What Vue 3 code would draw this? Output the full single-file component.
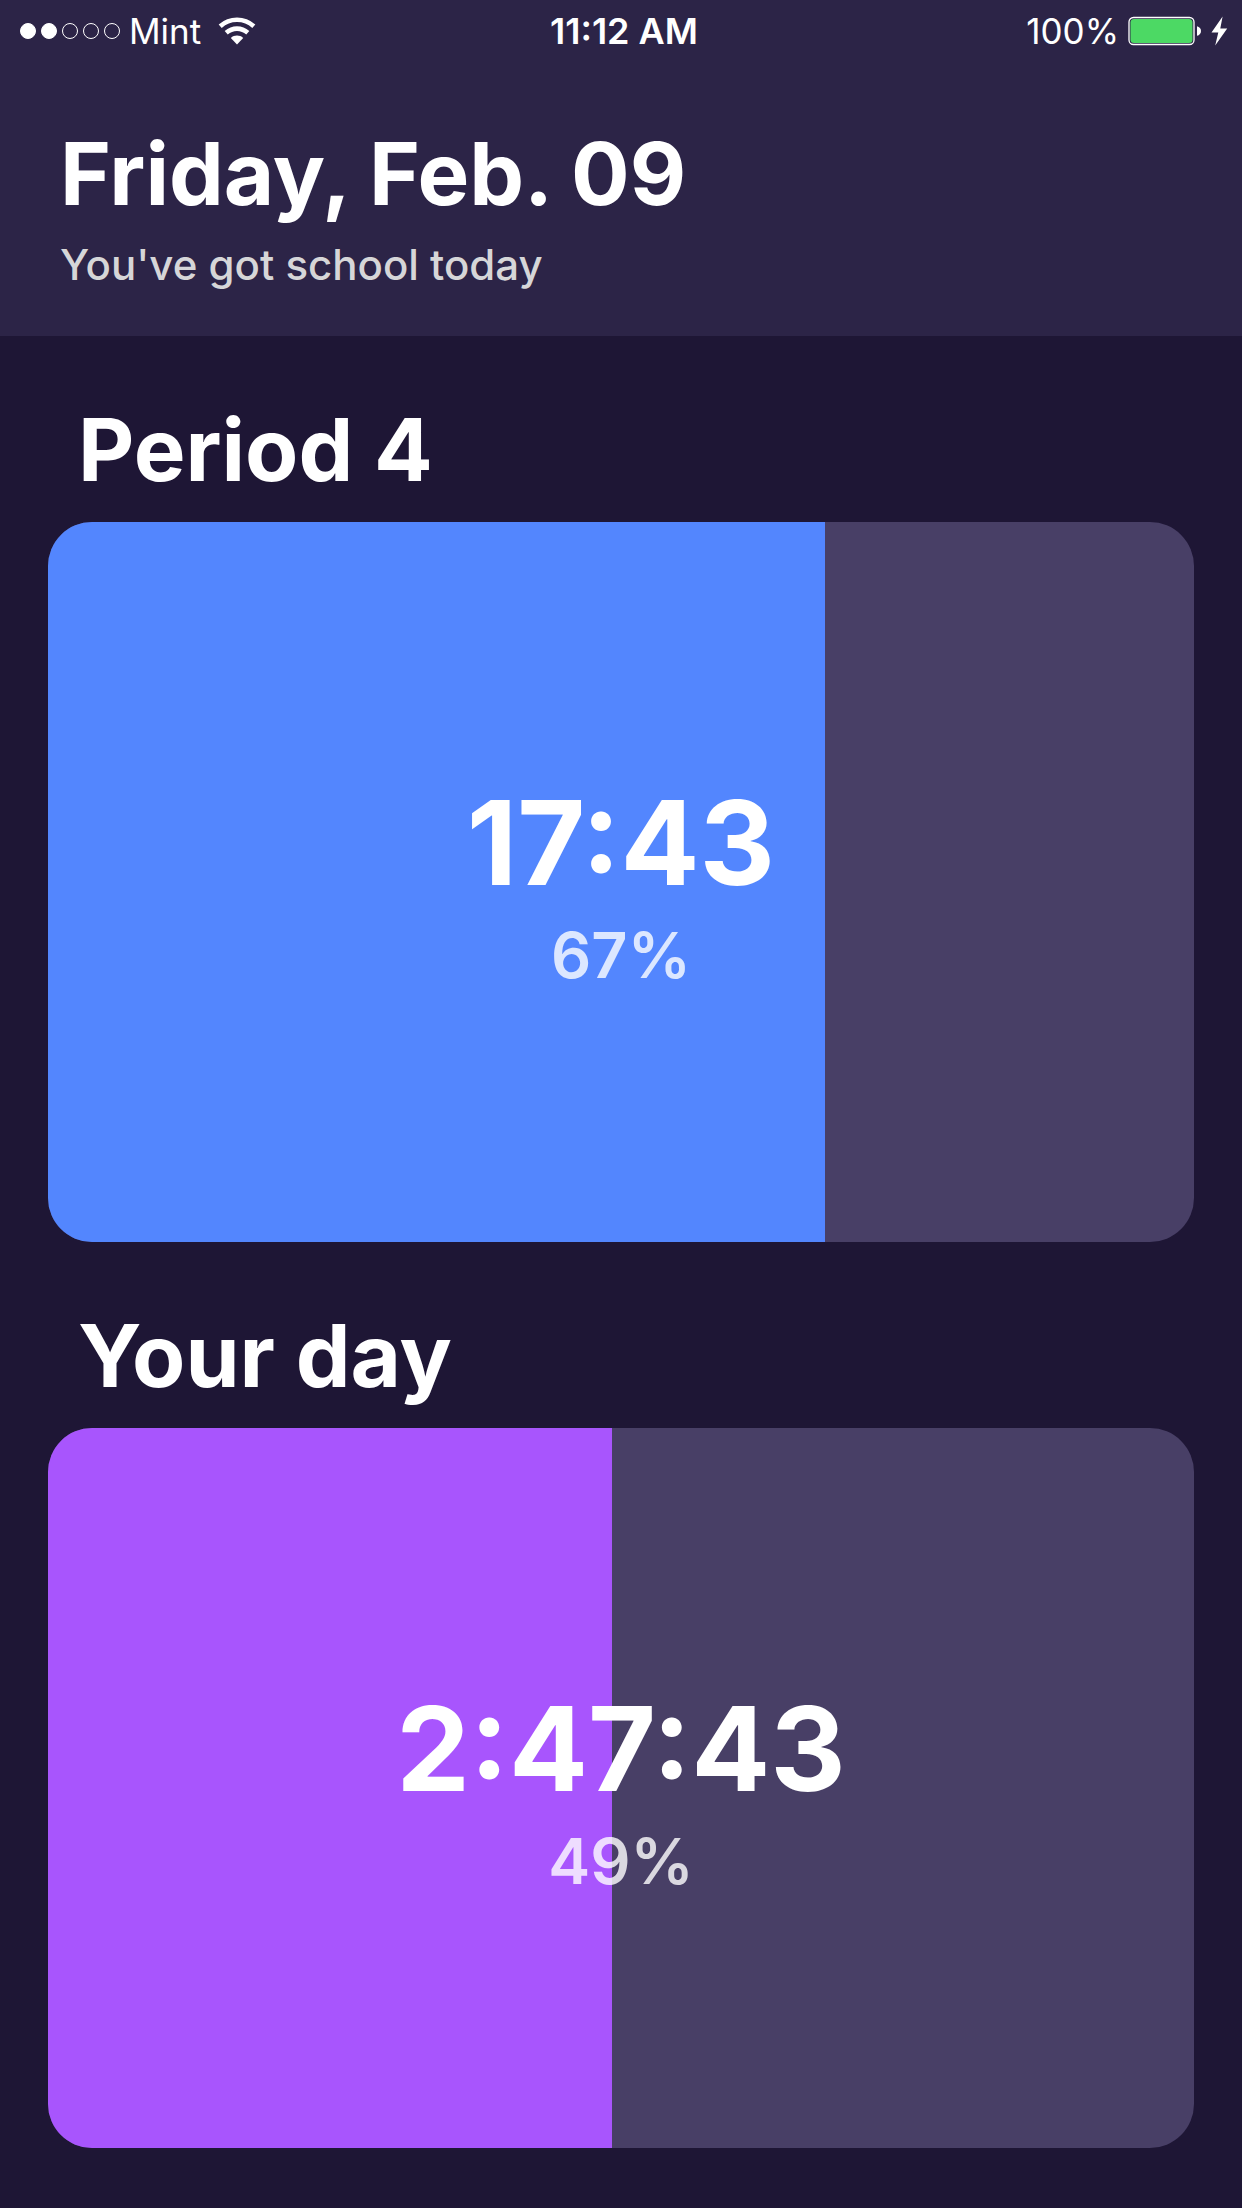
<script setup>
const signal = [true, true, false, false, false]

const timers = [
  { id: 'period', title: 'Period 4', remaining: '17:43', percent: 67, fill: 67.8, tone: 'blue' },
  { id: 'day', title: 'Your day', remaining: '2:47:43', percent: 49, fill: 49.2, tone: 'purple' },
]
</script>

<template>
  <div class="app">
    <header class="header">
      <div class="status">
        <div class="status-side">
          <div class="signal">
            <span v-for="(on, i) in signal" :key="i" class="dot" :class="{ on }"></span>
          </div>
          <span class="carrier">Mint</span>
          <svg class="wifi" width="38" height="28" viewBox="0 0 38 28" aria-label="Wi-Fi">
            <g fill="none" stroke="#fff" stroke-width="4.600">
              <path d="M2.200 9.200C11.800 .6 26.200 .6 35.800 9.200" />
              <path d="M8.200 15.800C14.500 10.200 23.500 10.200 29.800 15.800" />
            </g>
            <path d="M12.800 21C16.300 17.800 21.700 17.800 25.200 21L19 27.400Z" fill="#fff" />
          </svg>
        </div>
        <span class="clock">11:12 AM</span>
        <div class="status-side end">
          <span class="charge">100%</span>
          <svg class="battery" width="74" height="30" viewBox="0 0 74 30" aria-label="Battery full">
            <rect x="1" y="1.500" width="65" height="27" rx="4.500" fill="none" stroke="#fff" stroke-width="1.300" />
            <rect x="2.500" y="3" width="62" height="24" rx="3.500" fill="#4cd964" />
            <path d="M69 10.200C71.500 10.800 73 12.500 73 15S71.500 19.200 69 19.800Z" fill="#fff" />
          </svg>
          <svg class="bolt" width="17" height="30" viewBox="0 0 17 30" aria-label="Charging">
            <path d="M11.600 .5L.5 16.500H7.300L4.200 29.500L16.200 12.500H9.300Z" fill="#fff" />
          </svg>
        </div>
      </div>
      <div class="heading">
        <h1 class="title">Friday, Feb. 09</h1>
        <p class="subtitle">You've got school today</p>
      </div>
    </header>

    <main class="timers">
      <section v-for="t in timers" :key="t.id" class="timer">
        <h2 :id="t.id" class="title timer-title">{{ t.title }}</h2>
        <div
          class="card"
          role="progressbar"
          :aria-labelledby="t.id"
          :aria-valuenow="t.percent"
          aria-valuemin="0"
          aria-valuemax="100"
        >
          <div class="fill" :class="t.tone" :style="{ width: t.fill + '%' }"></div>
          <div class="readout">
            <span class="remaining">{{ t.remaining }}</span>
            <span class="percent">{{ t.percent }}%</span>
          </div>
        </div>
      </section>
    </main>
  </div>
</template>

<style>
body {
  margin: 0;
  background: #1e1635;
}
</style>

<style scoped>
.app {
  display: flex;
  flex-direction: column;
  min-height: 100vh;
  background: #1e1635;
  color: #fff;
  font-family: Inter, "Liberation Sans", sans-serif;
}

.header {
  background: #2c2447;
}

.status {
  display: grid;
  grid-template-columns: 1fr auto 1fr;
  align-items: center;
  height: 60px;
  padding: 0 14px 0 20px;
  font-size: 35px;
  line-height: 62px;
}

.status-side {
  display: flex;
  align-items: center;
  height: 60px;
}

.status-side.end {
  justify-content: flex-end;
}

.signal {
  display: flex;
  gap: 5px;
}

.dot {
  box-sizing: border-box;
  width: 16px;
  height: 16px;
  border: 1px solid #fff;
  border-radius: 50%;
}

.dot.on {
  background: #fff;
}

.carrier {
  margin: 0 17px 0 9px;
}

.clock {
  font-size: 36px;
  font-weight: 600;
}

.battery {
  margin: 0 9px 0 9px;
}

.heading {
  padding: 60px 60px 46px;
}

.title {
  margin: 0;
  font-size: 87px;
  font-weight: 700;
  line-height: 108px;
}

.subtitle {
  margin: 12px 0 0;
  color: #d6d6d8;
  font-size: 42px;
  font-weight: 500;
  line-height: 50px;
}

.timers {
  display: flex;
  flex: 1;
  flex-direction: column;
  gap: 60px;
  padding: 60px 48px;
}

.timer {
  display: flex;
  flex: 1;
  flex-direction: column;
}

.timer-title {
  padding: 0 30px 18px;
}

.card {
  position: relative;
  display: flex;
  flex: 1;
  align-items: center;
  justify-content: center;
  min-height: 300px;
  overflow: hidden;
  border-radius: 44px;
  background: #483f66;
}

.fill {
  position: absolute;
  top: 0;
  bottom: 0;
  left: 0;
}

.fill.blue {
  background: #5386fe;
}

.fill.purple {
  background: #a855fd;
}

.readout {
  position: relative;
  display: flex;
  flex-direction: column;
  align-items: center;
}

.remaining {
  font-size: 117px;
  font-weight: 700;
  line-height: 146px;
}

.percent {
  color: rgba(255, 255, 255, 0.8);
  font-size: 63px;
  font-weight: 600;
  line-height: 78px;
}
</style>
